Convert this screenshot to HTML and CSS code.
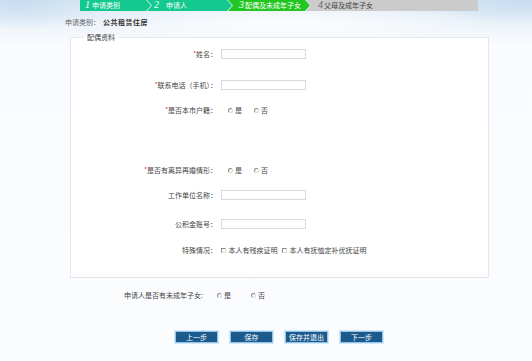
FILE: index.html
```html
<!DOCTYPE html>
<html lang="zh-CN">
<head>
<meta charset="utf-8">
<title>配偶及未成年子女</title>
<link rel="stylesheet" href="styles.css">
</head>
<body>
<div class="page">
  <div class="steps">
    <div class="step s1"><i class="num">1</i><span>申请类别</span></div>
    <div class="step s2"><i class="num">2</i><span>申请人</span></div>
    <div class="step s3"><i class="num">3</i><span>配偶及未成年子女</span></div>
    <div class="step s4"><i class="num">4</i><span>父母及成年子女</span></div>
  </div>

  <div class="category"><span class="cat-key">申请类别：</span><span class="cat-val">公共租赁住房</span></div>

  <fieldset class="panel">
    <legend class="panel-title">配偶资料</legend>

    <div class="row r1">
      <label class="lbl"><em class="req">*</em>姓名：</label>
      <input class="field" type="text">
    </div>

    <div class="row r2">
      <label class="lbl"><em class="req">*</em>联系电话（手机）：</label>
      <input class="field" type="text">
    </div>

    <div class="row r3">
      <label class="lbl"><em class="req">*</em>是否本市户籍：</label>
      <div class="opts">
        <span class="opt"><span class="radio"></span>是</span>
        <span class="opt"><span class="radio"></span>否</span>
      </div>
    </div>

    <div class="row r4">
      <label class="lbl"><em class="req">*</em>是否有离异再婚情形：</label>
      <div class="opts">
        <span class="opt"><span class="radio"></span>是</span>
        <span class="opt"><span class="radio"></span>否</span>
      </div>
    </div>

    <div class="row r5">
      <label class="lbl">工作单位名称：</label>
      <input class="field" type="text">
    </div>

    <div class="row r6">
      <label class="lbl">公积金账号：</label>
      <input class="field" type="text">
    </div>

    <div class="row r7">
      <label class="lbl">特殊情况：</label>
      <div class="checks">
        <span class="chk-opt"><span class="chk"></span>本人有残疾证明</span>
        <span class="chk-opt"><span class="chk"></span>本人有抚恤定补优抚证明</span>
      </div>
    </div>
  </fieldset>

  <div class="question">
    <span class="q-label">申请人是否有未成年子女:</span>
    <div class="q-opts">
      <span class="opt"><span class="radio"></span>是</span>
      <span class="opt"><span class="radio"></span>否</span>
    </div>
  </div>

  <div class="actions">
    <button class="btn" type="button">上一步</button>
    <button class="btn" type="button">保存</button>
    <button class="btn" type="button">保存并退出</button>
    <button class="btn" type="button">下一步</button>
  </div>
</div>
</body>
</html>
```

FILE: styles.css
```css
html, body {
  margin: 0;
  padding: 0;
}
body {
  height: 361px;
  overflow: hidden;
  font-family: "Noto Sans CJK SC", "Noto Sans", sans-serif;
  font-size: 7px;
  color: #444;
  background:
    radial-gradient(ellipse 200px 22px at 285px 22px, rgba(255,255,255,0.85), rgba(255,255,255,0) 100%),
    radial-gradient(ellipse 90px 30px at 20px 0px, rgba(196,220,240,0.9), rgba(196,220,240,0) 100%),
    radial-gradient(ellipse 100px 26px at 520px 0px, rgba(196,220,240,0.9), rgba(196,220,240,0) 100%),
    linear-gradient(180deg, #dbe8f5 0px, #e6eff8 16px, #f1f6fb 30px, #f9fbfe 46px, #fbfcfe 100%);
}
.page {
  margin-left: 65px;
  width: 424px;
}

/* step bar */
.steps {
  display: flex;
  height: 11px;
  margin-left: 15px;
  width: 398px;
}
.step {
  display: flex;
  align-items: center;
  height: 11px;
  padding-bottom: 1px;
  box-sizing: border-box;
  color: #fff;
  font-size: 7px;
  line-height: 10px;
  white-space: nowrap;
}
.step .num {
  font-family: "Liberation Serif", serif;
  font-style: italic;
  font-size: 10px;
  line-height: 10px;
}
.s1 {
  width: 71px;
  padding-left: 5px;
  background: #14c98f;
  clip-path: polygon(0 0, calc(100% - 5px) 0, 100% 50%, calc(100% - 5px) 100%, 0 100%);
}
.s1 .num { margin-right: 2px; }
.s2 {
  width: 85px;
  margin-left: -4px;
  padding-left: 7px;
  background: #14c98f;
  clip-path: polygon(0 0, calc(100% - 5px) 0, 100% 50%, calc(100% - 5px) 100%, 0 100%, 5px 50%);
}
.s2 .num { margin-right: 7px; }
.s3 {
  width: 82px;
  margin-left: -4px;
  padding-left: 11px;
  background: #22c620;
  clip-path: polygon(0 0, calc(100% - 5px) 0, 100% 50%, calc(100% - 5px) 100%, 0 100%, 5px 50%);
}
.s3 .num { margin-right: 1px; }
.s4 {
  width: 172px;
  margin-left: -4px;
  padding-left: 12px;
  background: #cbcbcb;
  color: #444;
  clip-path: polygon(0 0, 100% 0, 100% 100%, 0 100%, 5px 50%);
}
.s4 .num { color: #666; margin-right: 1px; }

/* category */
.category {
  margin-top: 6px;
  line-height: 10px;
  height: 10px;
  white-space: nowrap;
}
.cat-key { color: #666; }
.cat-val {
  margin-left: 3px;
  color: #333;
  font-weight: bold;
  letter-spacing: 0.5px;
}

/* panel */
.panel {
  margin: 5px 0 0 5px;
  padding: 0 0 20px 0;
  width: 419px;
  box-sizing: border-box;
  border: 1px solid #e4e7eb;
  background: #fff;
  min-inline-size: 0;
}
.panel-title {
  margin-left: 13px;
  padding: 0 3px;
  line-height: 10px;
  font-size: 7px;
  color: #444;
}
.row {
  display: flex;
  align-items: center;
  height: 14px;
}
.r1 { margin-top: 5px; }
.r2 { margin-top: 17px; }
.r3 { margin-top: 11px; }
.r4 { margin-top: 46px; }
.r5 { margin-top: 11px; }
.r6 { margin-top: 15px; }
.r7 { margin-top: 12px; }

.lbl {
  width: 146px;
  flex: none;
  text-align: right;
  color: #444;
  white-space: nowrap;
}
.req {
  font-style: normal;
  color: #e3262b;
  font-size: 6px;
  vertical-align: 1px;
}
.field {
  margin: 0 0 0 3.5px;
  width: 85px;
  height: 10px;
  padding: 0;
  box-sizing: border-box;
  border: 1px solid #d6d9dd;
  background: #fff;
  font-size: 7px;
}
.opts {
  display: flex;
  margin-left: 11px;
  gap: 12px;
}
.opt {
  display: inline-flex;
  align-items: center;
  gap: 2px;
  color: #444;
}
.radio {
  display: inline-block;
  width: 5px;
  height: 5px;
  box-sizing: border-box;
  border: 1px solid;
  border-color: #8a8a8a #d8d8d8 #d8d8d8 #8a8a8a;
  border-radius: 50%;
  background: #fff;
}
.checks {
  display: flex;
  margin-left: 3.5px;
  gap: 4px;
  white-space: nowrap;
}
.chk-opt {
  display: inline-flex;
  align-items: center;
  color: #444;
}
.chk {
  display: inline-block;
  width: 5px;
  height: 5px;
  margin-right: 3px;
  box-sizing: border-box;
  border: 1px solid;
  border-color: #8a8a8a #dcdcdc #dcdcdc #8a8a8a;
  background: #fff;
}

/* question */
.question {
  display: flex;
  align-items: center;
  height: 14px;
  margin-top: 10px;
  margin-left: 59px;
}
.q-label {
  color: #444;
  white-space: nowrap;
}
.q-opts {
  display: flex;
  margin-left: 14px;
  gap: 20px;
}

/* buttons */
.actions {
  display: flex;
  gap: 12px;
  margin-top: 29px;
  margin-left: 110px;
}
.btn {
  width: 43px;
  height: 12px;
  padding: 0;
  box-sizing: border-box;
  border: 1px solid #93c6ec;
  background: #1b5a8b;
  color: #fff;
  font-family: "Noto Sans CJK SC", "Noto Sans", sans-serif;
  font-size: 7px;
  line-height: 10px;
  box-shadow: 0 0 0 1px #d4e8f7;
}
```
